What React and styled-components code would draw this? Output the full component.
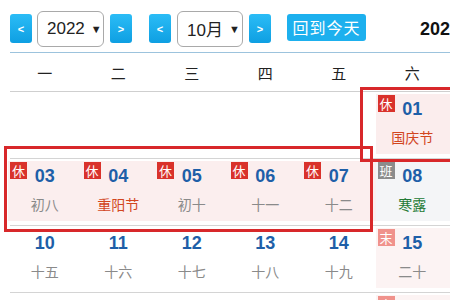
import React from "react";
import styled, { createGlobalStyle } from "styled-components";

const Global = createGlobalStyle`
  html, body { margin: 0; padding: 0; background: #fff; overflow: hidden; }
  body { font-family: "Liberation Sans", "Noto Sans CJK SC", sans-serif; width: 450px; height: 300px; }
`;

const Page = styled.div`
  width: 560px;
  position: relative;
`;

const Toolbar = styled.div`
  display: flex;
  align-items: center;
  height: 53px;
  margin-left: 10px;
  border-bottom: 1px solid #9cc3dd;
  box-sizing: border-box;
  padding-top: 5px;
`;

const ArrowBtn = styled.div`
  width: 22px;
  height: 29px;
  border-radius: 3px;
  background: linear-gradient(#2bbcf6, #0e9fe2);
  color: #fff;
  font: bold 11px "Liberation Sans", sans-serif;
  display: flex;
  align-items: center;
  justify-content: center;
  margin-left: ${(p) => p.$ml || 0}px;
  flex: none;
`;

const Select = styled.div`
  width: ${(p) => p.$w}px;
  height: 36px;
  box-sizing: border-box;
  border: 1px solid #a9a9a9;
  border-radius: 6px;
  margin-left: ${(p) => p.$ml}px;
  display: flex;
  align-items: center;
  padding-left: 9px;
  font-size: 17px;
  color: #222;
  font-family: "Liberation Sans", "Noto Sans CJK SC", sans-serif;
  flex: none;
`;

const Caret = styled.span`
  font-size: 11px;
  margin-left: 6px;
`;

const TodayBtn = styled.div`
  margin-left: 16px;
  width: 79px;
  height: 27px;
  border-radius: 3px;
  background: #1db0ee;
  color: #fff;
  font: 16px "Noto Sans CJK SC", sans-serif;
  display: flex;
  align-items: center;
  justify-content: center;
  letter-spacing: 1px;
  margin-top: -3px;
  flex: none;
`;

const Title = styled.div`
  margin-left: 54px;
  font: bold 18px "Liberation Sans", "Noto Sans CJK SC", sans-serif;
  color: #111;
  white-space: nowrap;
  margin-top: -3px;
`;

const Calendar = styled.div`
  position: relative;
  margin-left: 8px;
`;

const HeadRow = styled.div`
  display: grid;
  grid-template-columns: repeat(7, 73.5px);
  height: 38px;
  border-bottom: 1px solid #cfcfcf;
  margin-left: 2px;
  margin-right: -2px;
`;

const HeadCell = styled.div`
  display: flex;
  align-items: center;
  justify-content: center;
  font: 15px "Noto Sans CJK SC", sans-serif;
  color: #222;
  margin-left: -2px;
  margin-right: 2px;
`;

const WeekRow = styled.div`
  display: grid;
  grid-template-columns: repeat(7, 73.5px);
  height: 66px;
  border-bottom: 1px solid #d4d4d4;
  margin-left: 2px;
`;

const Cell = styled.div`
  position: relative;
  margin: 2px 4px 0 0;
  margin-left: -2px;
  margin-right: 2px;
  height: 60px;
  box-sizing: border-box;
  padding-top: 4px;
  background: ${(p) => p.$bg || "transparent"};
  display: flex;
  flex-direction: column;
  align-items: center;
`;

const Num = styled.div`
  font: bold 18px/22px "Liberation Sans", sans-serif;
  color: #1e5fa8;
`;

const Lunar = styled.div`
  margin-top: 7px;
  font: 14px/20px "Noto Sans CJK SC", sans-serif;
  color: ${(p) => p.$c || "#8a8a8a"};
`;

const Badge = styled.div`
  position: absolute;
  left: 2px;
  top: 1px;
  width: 17px;
  height: 17px;
  background: ${(p) => p.$bg};
  color: #fff;
  font: 13px/17px "Noto Sans CJK SC", sans-serif;
  text-align: center;
`;

const RedBox = styled.div`
  position: absolute;
  border: 3px solid #d8282a;
  box-sizing: border-box;
  pointer-events: none;
`;

const badgeColors = { 休: "#d9322b", 班: "#8c8c8c", 末: "#f0928c" };

const weeks = [
  [null, null, null, null, null, { n: "01", l: "国庆节", c: "#d2461e", b: "休", bg: "#fbeded" }, { n: "02", l: "初七", b: "休", bg: "#fbeded" }],
  [
    { n: "03", l: "初八", b: "休", bg: "#fbeeee" },
    { n: "04", l: "重阳节", c: "#d2461e", b: "休", bg: "#fbeeee" },
    { n: "05", l: "初十", b: "休", bg: "#fbeeee" },
    { n: "06", l: "十一", b: "休", bg: "#fbeeee" },
    { n: "07", l: "十二", b: "休", bg: "#fbeeee" },
    { n: "08", l: "寒露", c: "#237a35", b: "班", bg: "#f4f5f7" },
    { n: "09", l: "十四", b: "班", bg: "#f4f5f7" },
  ],
  [
    { n: "10", l: "十五" },
    { n: "11", l: "十六" },
    { n: "12", l: "十七" },
    { n: "13", l: "十八" },
    { n: "14", l: "十九" },
    { n: "15", l: "二十", b: "末", bg: "#fcf3f3" },
    { n: "16", l: "廿一", b: "末", bg: "#fcf3f3" },
  ],
  [
    { n: "17", l: "廿二" },
    { n: "18", l: "廿三" },
    { n: "19", l: "廿四" },
    { n: "20", l: "廿五" },
    { n: "21", l: "廿六" },
    { n: "22", l: "廿七", b: "末", bg: "#fcf3f3" },
    { n: "23", l: "霜降", b: "末", bg: "#fcf3f3" },
  ],
];

const heads = ["一", "二", "三", "四", "五", "六", "日"];

export default function App() {
  return (
    <Page>
      <Global />
      <Toolbar>
        <ArrowBtn>&lt;</ArrowBtn>
        <Select $w={67} $ml={5}>
          2022<Caret>▼</Caret>
        </Select>
        <ArrowBtn $ml={6}>&gt;</ArrowBtn>
        <ArrowBtn $ml={17}>&lt;</ArrowBtn>
        <Select $w={66} $ml={6}>
          10月<Caret>▼</Caret>
        </Select>
        <ArrowBtn $ml={6}>&gt;</ArrowBtn>
        <TodayBtn>回到今天</TodayBtn>
        <Title>2022年10月</Title>
      </Toolbar>
      <Calendar>
        <HeadRow>
          {heads.map((h) => (
            <HeadCell key={h}>{h}</HeadCell>
          ))}
        </HeadRow>
        {weeks.map((w, i) => (
          <WeekRow key={i}>
            {w.map((d, j) =>
              d ? (
                <Cell key={j} $bg={d.bg}>
                  {d.b && <Badge $bg={badgeColors[d.b]}>{d.b}</Badge>}
                  <Num>{d.n}</Num>
                  <Lunar $c={d.c}>{d.l}</Lunar>
                </Cell>
              ) : (
                <Cell key={j} />
              )
            )}
          </WeekRow>
        ))}
        <RedBox style={{ left: -4, top: 93, width: 369, height: 86 }} />
        <RedBox style={{ left: 352, top: 34, width: 110, height: 75 }} />
      </Calendar>
    </Page>
  );
}
